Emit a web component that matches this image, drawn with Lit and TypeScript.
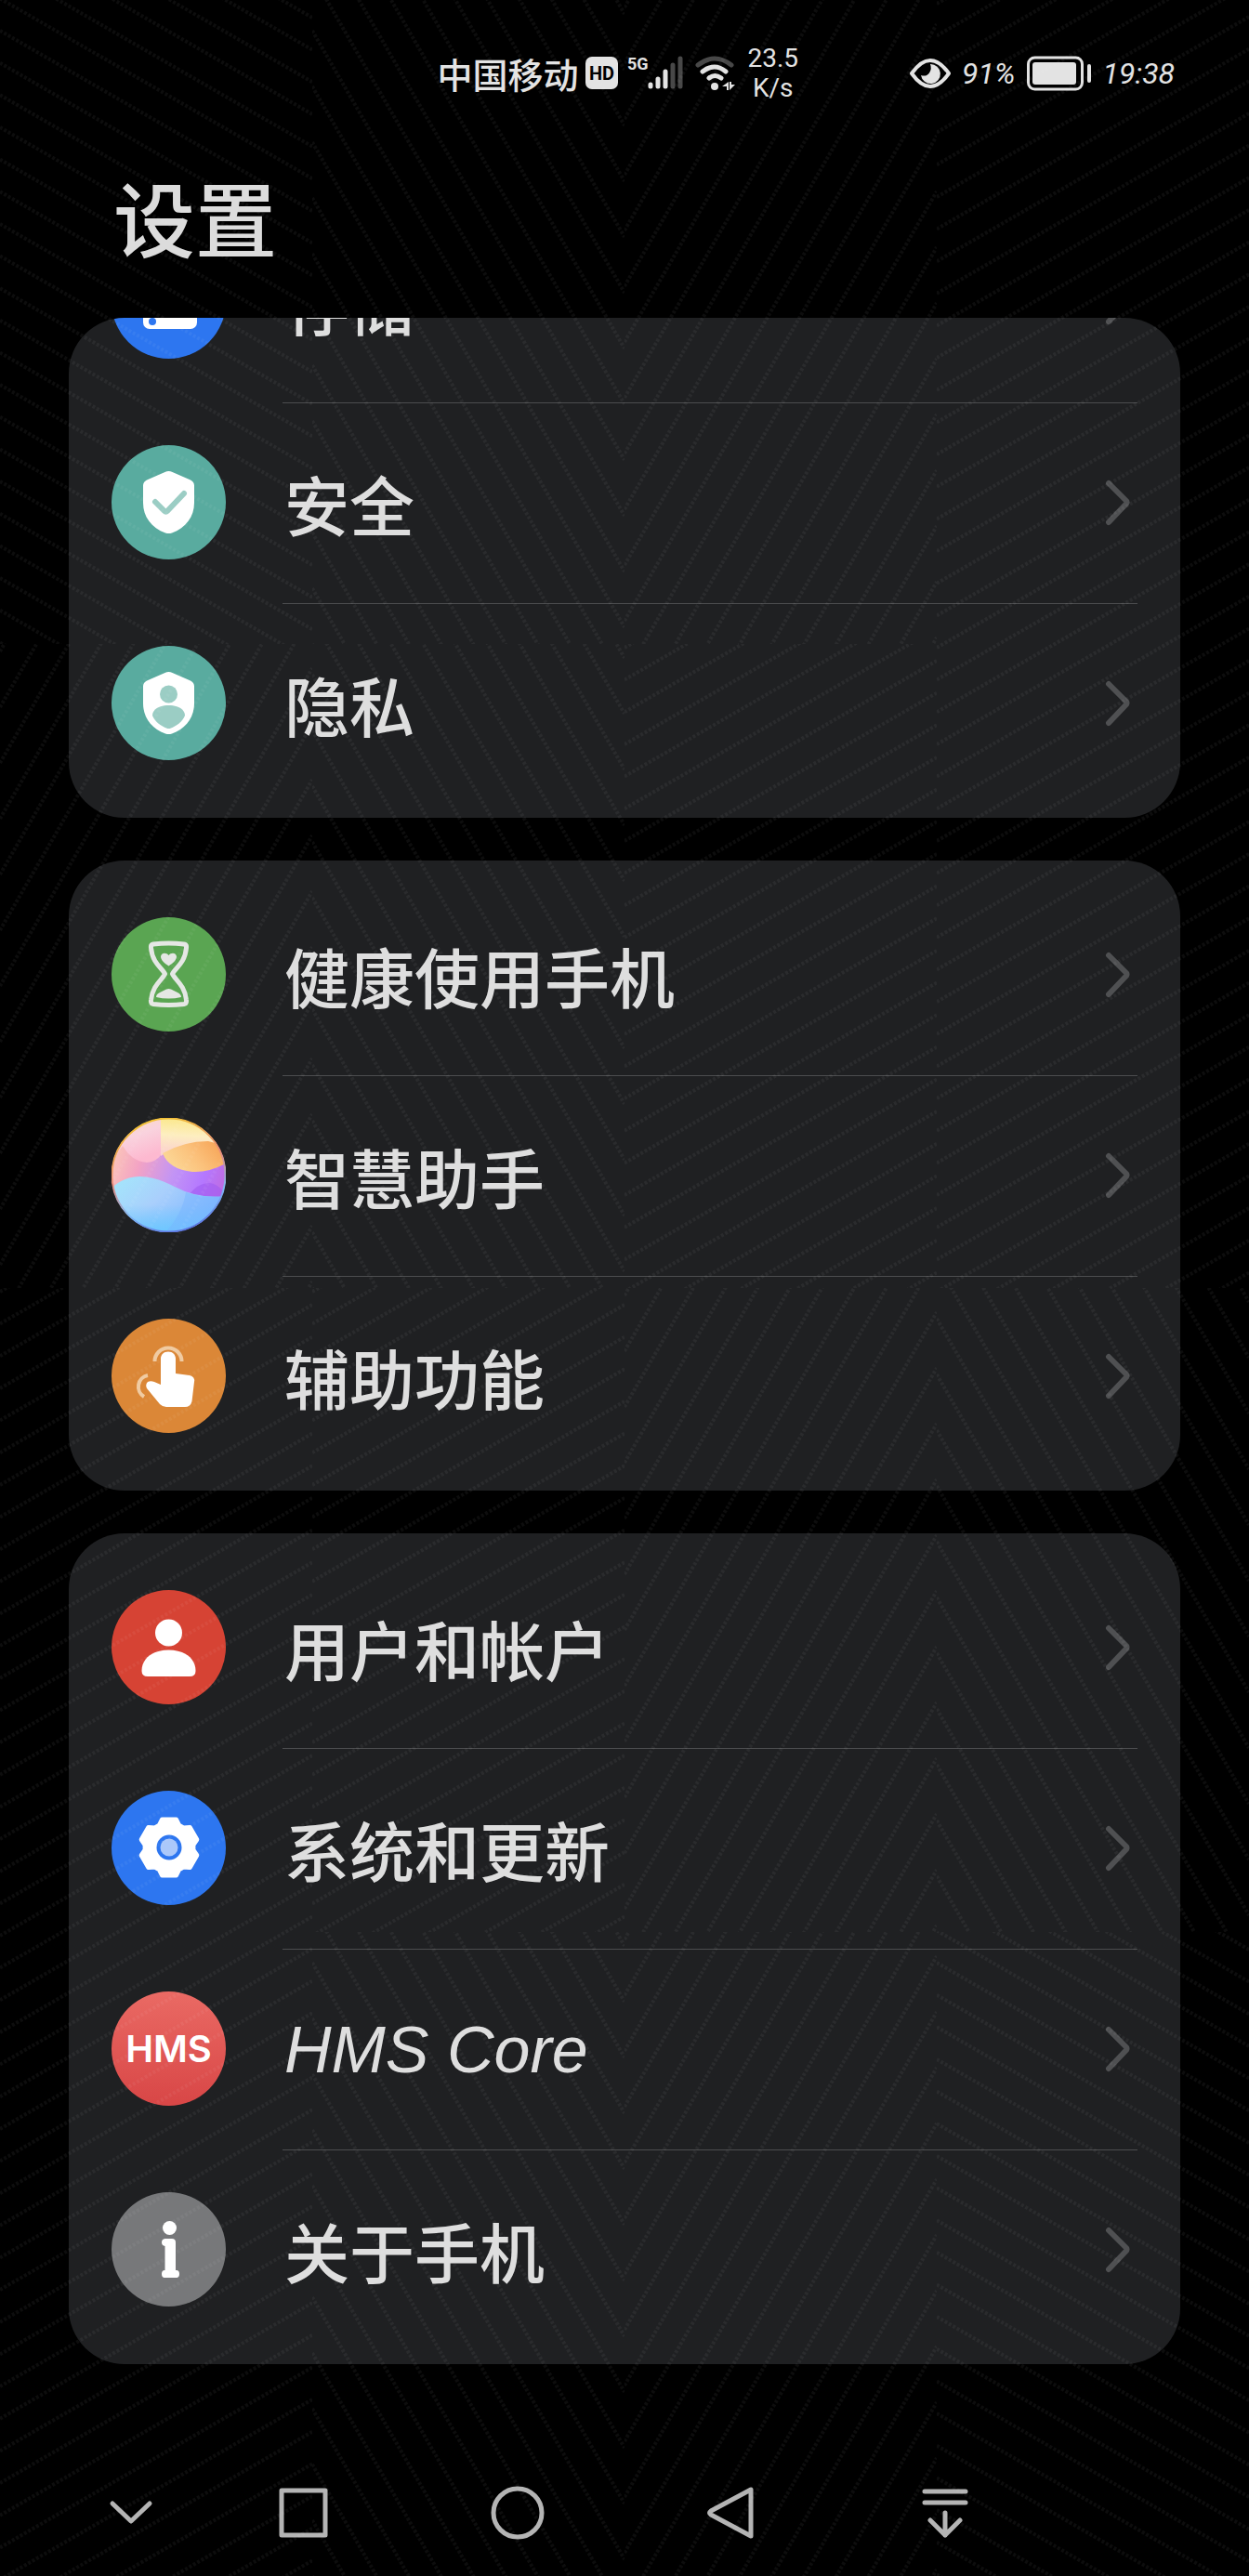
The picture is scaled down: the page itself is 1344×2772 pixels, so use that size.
import { LitElement, html, svg, css } from "lit";
import { customElement, property } from "lit/decorators.js";

type IconName =
  | "storage" | "shield" | "privacy" | "hourglass" | "assistant"
  | "touch" | "user" | "gear" | "hms" | "info";

interface Entry {
  icon: IconName;
  label: string;
}

const GROUPS: Entry[][] = [
  [
    { icon: "storage", label: "存储" },
    { icon: "shield", label: "安全" },
    { icon: "privacy", label: "隐私" },
  ],
  [
    { icon: "hourglass", label: "健康使用手机" },
    { icon: "assistant", label: "智慧助手" },
    { icon: "touch", label: "辅助功能" },
  ],
  [
    { icon: "user", label: "用户和帐户" },
    { icon: "gear", label: "系统和更新" },
    { icon: "hms", label: "HMS Core" },
    { icon: "info", label: "关于手机" },
  ],
];

const SHIELD =
  "M61.5 28q2 0 4 1L85 37.500q4 2 4 6V62c0 15-9 27-24 32.500q-3.500 1-7 0C43 89 34 77 34 62V43.500q0-4 4-6L57.500 29q2-1 4-1z";

const gearPath = (): string => {
  const points: string[] = [];
  for (let k = 0; k < 6; k++) {
    const mid = -90 + k * 60;
    for (const [offset, radius] of [[-24, 26], [-14, 31], [14, 31], [24, 26]]) {
      const a = ((mid + offset) * Math.PI) / 180;
      points.push(`${(62 + radius * Math.cos(a)).toFixed(1)} ${(61 + radius * Math.sin(a)).toFixed(1)}`);
    }
  }
  return `M${points.join("L")}Z`;
};

const disc = (fill: string) => svg`<circle cx="61.5" cy="61.5" r="61.5" fill=${fill} />`;

const ICONS: Record<IconName, unknown> = {
  storage: svg`${disc("#2d76f0")}
    <rect x="34" y="32" width="58" height="27" rx="7" fill="#fff" />
    <rect x="34" y="64" width="58" height="27" rx="7" fill="#fff" />
    <circle cx="44" cy="83" r="4" fill="#2d76f0" />`,
  shield: svg`${disc("#59ab9f")}<path d=${SHIELD} fill="#fff" />
    <path d="M47 61L57 71Q58.500 72.500 60 71L78 52" fill="none" stroke="#9bcdc4" stroke-width="6" stroke-linecap="round" />`,
  privacy: svg`${disc("#59ab9f")}<path d=${SHIELD} fill="#fff" />
    <circle cx="61.5" cy="52" r="9.500" fill="#9bcdc4" />
    <path d="M61.500 64C71 64 79 68 79 75C76 82 70 86 64 88.500Q61.500 89.500 59 88.500C53 86 47 82 44 75C44 68 52 64 61.500 64z" fill="#9bcdc4" />`,
  hourglass: svg`${disc("#5aa552")}
    <path d="M45 29Q61.500 27 78 29Q81 29.500 80.500 33C79 50 68 55 65.500 61C68 67 79 73 80.500 89Q81 93 78 93.500Q61.500 95.500 45 93.500Q42 93 42.500 89C44 73 55 67 57.500 61C55 55 44 50 42.500 33Q42 29.500 45 29z" fill="none" stroke="#e5e7e4" stroke-width="5" stroke-linejoin="round" />
    <path d="M61.500 52.500C57 49.500 53 46 53 42.500C53 38 59 37.500 61.500 41C64 37.500 70 38 70 42.500C70 46 66 49.500 61.500 52.500z" fill="#e5e7e4" />
    <path d="M48 86Q48 83 52 81L59 77.500Q61.500 76.500 64 77.500L71 81Q75 83 75 86Q61.500 89 48 86z" fill="#e5e7e4" />`,
  assistant: svg`
    <defs>
      <clipPath id="ball"><circle cx="61.5" cy="61.5" r="61.5" /></clipPath>
      <linearGradient id="mid" x1="0" y1="0.300" x2="1" y2="0.600">
        <stop offset="0" stop-color="#fbc8b8" /><stop offset="0.250" stop-color="#f3a3c4" />
        <stop offset="0.550" stop-color="#c294f5" /><stop offset="0.800" stop-color="#b478ff" /><stop offset="1" stop-color="#c06be0" />
      </linearGradient>
      <linearGradient id="rose" x1="0" y1="0" x2="0.400" y2="1">
        <stop offset="0" stop-color="#fddcb8" /><stop offset="0.500" stop-color="#f9d3de" /><stop offset="1" stop-color="#fdb9d0" />
      </linearGradient>
      <linearGradient id="sun" x1="0.300" y1="0" x2="0.200" y2="1">
        <stop offset="0" stop-color="#fbe88a" /><stop offset="0.450" stop-color="#fdeec0" /><stop offset="1" stop-color="#fbcdd0" />
      </linearGradient>
      <linearGradient id="amber" x1="0" y1="0.600" x2="1" y2="0.200">
        <stop offset="0" stop-color="#fcd998" /><stop offset="0.500" stop-color="#fbc07a" /><stop offset="1" stop-color="#f6a254" />
      </linearGradient>
      <linearGradient id="sea" x1="0" y1="0.200" x2="1" y2="0.700">
        <stop offset="0" stop-color="#a4e4fb" /><stop offset="0.400" stop-color="#a9cffc" /><stop offset="1" stop-color="#74b2ff" />
      </linearGradient>
      <linearGradient id="azure" x1="0" y1="0" x2="0" y2="1">
        <stop offset="0.500" stop-color="#6cc8ff" stop-opacity="0" /><stop offset="1" stop-color="#6cc8ff" />
      </linearGradient>
      <linearGradient id="rim" x1="0.300" y1="0" x2="0.600" y2="1">
        <stop offset="0" stop-color="#f2c52e" /><stop offset="0.450" stop-color="#e88a78" />
        <stop offset="0.750" stop-color="#7fb8f5" /><stop offset="1" stop-color="#5c74e0" />
      </linearGradient>
    </defs>
    <g clip-path="url(#ball)">
      <rect width="123" height="123" fill="url(#mid)" />
      <path d="M0 0H53V40Q48 47 38 48C26 47 18 40 12 30L0 46z" fill="url(#rose)" />
      <path d="M53 0H123V32Q86 20 56 39L53 41z" fill="url(#sun)" />
      <path d="M55 38Q78 25 104 25L123 30V49Q104 59 87 58C70 56 60 50 55 38z" fill="url(#amber)" />
      <path d="M82 84Q96 66 110 71Q118 74 123 84V90H90z" fill="#a05cf0" opacity="0.600" />
      <path d="M0 75Q14 63 30 63C44 63 56 68 68 74Q92 87 123 84V123H0z" fill="url(#sea)" />
      <path d="M0 75Q14 63 30 63C44 63 56 68 68 74Q92 87 123 84V123H0z" fill="url(#azure)" />
      <path d="M58 123Q76 104 80 80Q100 87 123 84V123z" fill="#78b4ff" opacity="0.450" />
    </g>
    <circle cx="61.5" cy="61.5" r="61" fill="none" stroke="url(#rim)" stroke-width="2" />`,
  touch: svg`${disc("#db8737")}
    <path d="M61 35.500C66 35.500 69 39 69 43V59L84 61Q90 62.500 89 68L86.500 89Q85 95 79 95H59Q55 95 52 92L38 75Q36 71 39 68Q42 66.500 46 68L53 71V43C53 39 56 35.500 61 35.500z" fill="#fff" />
    <path d="M46.500 46A14.500 14.500 0 1 1 75.500 46M39 61A12.500 12.500 0 0 0 35 84" fill="none" stroke="#f0cba2" stroke-width="4" />`,
  user: svg`${disc("#d64334")}
    <circle cx="61.5" cy="46" r="14.500" fill="#fff" />
    <path d="M61.500 64.500C78 64.500 90.500 73 90.500 87Q90.500 93 84 93H39Q32.500 93 32.500 87C32.500 73 45 64.500 61.500 64.500z" fill="#fff" />`,
  gear: svg`${disc("#2d76f0")}
    <path d=${gearPath()} fill="#fff" stroke="#fff" stroke-width="5" stroke-linejoin="round" />
    <circle cx="62" cy="61" r="13.500" fill="#2d76f0" /><circle cx="62" cy="61" r="9.500" fill="#abc8fa" />`,
  hms: svg`
    <defs><linearGradient id="hms" x1="0" y1="0" x2="0" y2="1">
      <stop offset="0" stop-color="#ea6a64" /><stop offset="1" stop-color="#d84646" />
    </linearGradient></defs>
    ${disc("url(#hms)")}
    <text class="hms" x="61.5" y="76" text-anchor="middle">HMS</text>`,
  info: svg`${disc("#77787a")}
    <circle cx="62.5" cy="38.5" r="7.500" fill="#fff" />
    <path d="M57.500 50H65Q69 50 69 54V84H70.500Q73 84.500 73 88T70.500 92H56.500Q54 91.500 54 88T56.500 84H57.500V58Q54 57.500 54 54T57.500 50z" fill="#fff" />`,
};

@customElement("settings-row")
export class SettingsRow extends LitElement {
  @property() icon: IconName = "info";
  @property() label = "";
  @property({ type: Boolean }) divided = false;

  static styles = css`
    :host {
      display: block;
    }
    .row {
      display: flex;
      height: 216px;
      padding: 0 46px;
      color: #dedede;
      text-decoration: none;
    }
    .icon {
      flex: none;
      align-self: center;
      width: 123px;
      height: 123px;
      margin: 0 61px 3px 0;
    }
    .hms {
      fill: #fff;
      font: 600 40px Inter, sans-serif;
    }
    .body {
      flex: 1;
      display: flex;
      align-items: center;
      justify-content: space-between;
      padding: 0 8px 0 2px;
      border-bottom: 1px solid transparent;
    }
    .divided {
      border-bottom-color: #4c4d4f;
    }
    .label {
      font: 500 70px/80px "Noto Sans CJK SC", sans-serif;
    }
    .latin {
      font: italic 70px/80px "Liberation Sans", sans-serif;
    }
    .chevron {
      width: 28px;
      height: 52px;
      margin-bottom: 1px;
      fill: none;
      stroke: #4f5052;
      stroke-width: 6;
      stroke-linecap: round;
      stroke-linejoin: round;
    }
  `;

  render() {
    const latin = /^[\x20-\x7e]+$/.test(this.label);
    return html`
      <a class="row" href="#">
        <svg class="icon" viewBox="0 0 123 123" aria-hidden="true">${ICONS[this.icon]}</svg>
        <span class="body ${this.divided ? "divided" : ""}">
          <span class="${latin ? "latin" : "label"}">${this.label}</span>
          <svg class="chevron" viewBox="0 0 28 52" aria-hidden="true"><path d="M5 5L24 24Q25 25.500 24 27L5 47" /></svg>
        </span>
      </a>
    `;
  }
}

@customElement("status-bar")
export class StatusBar extends LitElement {
  static styles = css`
    :host {
      display: block;
    }
    .bar {
      display: flex;
      align-items: center;
      justify-content: space-between;
      height: 158px;
      padding: 0 80px 0 35%;
      color: #e3e3e3;
    }
    .group {
      display: flex;
      align-items: center;
      gap: 12px;
    }
    .carrier {
      display: flex;
      align-items: center;
      gap: 8px;
      font: 500 38px/44px "Noto Sans CJK SC", sans-serif;
    }
    .speed {
      font: 28px/32px Roboto, sans-serif;
      text-align: center;
    }
    .figure {
      font: italic 32px/40px Roboto, sans-serif;
    }
    .badge {
      font: 700 20px Roboto, sans-serif;
      fill: #000;
    }
    .signal {
      overflow: visible;
    }
    .tech {
      font: 700 18px Roboto, sans-serif;
      fill: #e3e3e3;
    }
  `;

  render() {
    return html`
      <div class="bar">
        <div class="group">
          <span class="carrier">中国移动
            <svg width="36" height="36" viewBox="0 0 36 36">
              <rect width="35" height="35" rx="7" fill="#e3e3e3" />
              <text class="badge" x="17.5" y="25" text-anchor="middle">HD</text>
            </svg>
          </span>
          <svg class="signal" width="58" height="38" viewBox="0 0 58 38">
            <text class="tech" x="-3" y="15">5G</text>
            <g stroke-width="5" stroke-linecap="round" stroke="#e3e3e3">
              <path d="M22 31V33M30 25V33M38 17V33" />
              <path d="M46 10V33M54 3V33" stroke="#484848" />
            </g>
          </svg>
          <svg width="44" height="38" viewBox="0 0 44 38">
            <g fill="none" stroke-linecap="round" stroke-width="5" stroke="#e3e3e3">
              <path d="M3 10Q21 -4 39 10" stroke="#484848" />
              <path d="M8 17Q21 7 33 17M15 24Q21 19 28 24" />
            </g>
            <circle cx="21" cy="33" r="4" fill="#e3e3e3" />
            <path d="M29 33L36 28V37H34V33zM37 28V37L43 31H39V28z" fill="#e3e3e3" />
          </svg>
          <span class="speed">23.5<br />K/s</span>
        </div>
        <div class="group">
          <svg width="44" height="34" viewBox="0 0 44 34">
            <path d="M2 17Q12 3 22 3T42 17Q32 31 22 31T2 17z" fill="none" stroke="#e3e3e3" stroke-width="4" stroke-linejoin="round" />
            <path d="M22 7A10.500 10.500 0 1 1 12 19Q18 21 21 16.500T22 7z" fill="#e3e3e3" />
          </svg>
          <span class="figure">91%</span>
          <svg width="70" height="38" viewBox="0 0 70 38">
            <rect x="1.5" y="2" width="58" height="34" rx="7" fill="none" stroke="#e3e3e3" stroke-width="3" />
            <rect x="6" y="7" width="47" height="24" rx="3" fill="#e3e3e3" />
            <rect x="65" y="9" width="4" height="20" rx="2" fill="#e3e3e3" />
          </svg>
          <span class="figure">19:38</span>
        </div>
      </div>
    `;
  }
}

@customElement("nav-bar")
export class NavBar extends LitElement {
  static styles = css`
    :host {
      display: block;
    }
    .bar {
      display: grid;
      grid-template-columns: 70fr 142fr repeat(4, 230fr) 212fr;
      height: 136px;
    }
    .key {
      display: grid;
      place-items: center;
      padding: 0;
      border: 0;
      background: none;
    }
    .first {
      grid-column-start: 2;
    }
    .glyph {
      width: 60px;
      height: 60px;
      fill: none;
      stroke: #b4b4b4;
      stroke-width: 5;
      stroke-linecap: round;
      stroke-linejoin: round;
    }
  `;

  render() {
    const keys = [
      { name: "隐藏导航键", path: "M10 20L30 39L50 20" },
      { name: "多任务", path: "M6 6H53V54H6z" },
      { name: "主屏幕", path: "M30 4A26 26 0 0 1 30 56A26 26 0 0 1 30 4z" },
      { name: "返回", path: "M51 5V55L8 32Q5 30 8 28z" },
      { name: "通知面板", path: "M8 7H52M8 19H52M30 30V54M14 38L30 54L46 38" },
    ];
    return html`
      <nav class="bar">
        ${keys.map(
          (key, i) => html`
            <button class="key ${i === 0 ? "first" : ""}" aria-label=${key.name}>
              <svg class="glyph" viewBox="0 0 60 60"><path d=${key.path} /></svg>
            </button>
          `,
        )}
      </nav>
    `;
  }
}

type Hatch = "fall" | "plunge" | "climb" | "rise";

/* Slope, vertical pitch and first intercept of each family of dotted lines. */
const HATCHES: Record<Hatch, { slope: number; pitch: number; start: number }> = {
  fall: { slope: 0.577, pitch: 34.65, start: 33 },
  plunge: { slope: 1.732, pitch: 60, start: 33 },
  climb: { slope: -1.732, pitch: 60, start: 8 },
  rise: { slope: -0.577, pitch: 34.65, start: 4 },
};

const TILES: Hatch[] = [
  "fall", "plunge", "climb", "rise",
  "climb", "plunge", "rise", "rise",
  "rise", "rise", "climb", "plunge",
  "rise", "plunge", "climb", "fall",
];

@customElement("hatch-overlay")
export class HatchOverlay extends LitElement {
  static styles = css`
    :host {
      display: block;
    }
    .tiles {
      display: grid;
      grid-template: repeat(4, 1fr) / repeat(4, 1fr);
      height: 100%;
    }
    .tile {
      width: 100%;
      height: 100%;
      min-height: 0;
      overflow: hidden;
      fill: none;
      stroke: #fff;
      stroke-opacity: 0.05;
      stroke-width: 4;
      stroke-dasharray: 3 2;
    }
  `;

  private lines(kind: Hatch): string {
    const { slope, pitch, start } = HATCHES[kind];
    const drop = slope * 336;
    let d = "";
    for (let k = -12; k < 32; k++) {
      const y = start + k * pitch;
      if (Math.max(y, y + drop) < 0 || Math.min(y, y + drop) > 693) continue;
      d += `M0 ${y.toFixed(1)}L336 ${(y + drop).toFixed(1)}`;
    }
    return d;
  }

  render() {
    return html`
      <div class="tiles" aria-hidden="true">
        ${TILES.map(
          (kind) => html`
            <svg class="tile" viewBox="0 0 336 693" preserveAspectRatio="xMidYMid slice">
              <path d=${this.lines(kind)} />
            </svg>
          `,
        )}
      </div>
    `;
  }
}

@customElement("app-root")
export class AppRoot extends LitElement {
  static styles = css`
    :host {
      display: block;
      background: #000;
    }
    .screen {
      position: relative;
      display: flex;
      flex-direction: column;
      min-height: 100vh;
    }
    .title {
      margin: 0;
      padding: 24px 122px 60px;
      color: #dcdcdc;
      font: 500 88px/100px "Noto Sans CJK SC", sans-serif;
    }
    .list {
      display: flex;
      flex-direction: column;
      gap: 46px;
      padding: 0 74px;
    }
    .card {
      padding: 16px 0 14px;
      border-radius: 60px;
      background: #1f2022;
      overflow: hidden;
    }
    .scrolled {
      padding-top: 0;
    }
    .scrolled > :first-child {
      margin-top: -124px;
    }
    .nav {
      margin-top: auto;
    }
    .overlay {
      position: absolute;
      inset: 0;
      pointer-events: none;
    }
  `;

  render() {
    return html`
      <div class="screen">
        <status-bar></status-bar>
        <h1 class="title">设置</h1>
        <main class="list">
          ${GROUPS.map(
            (group, g) => html`
              <section class="card ${g === 0 ? "scrolled" : ""}">
                ${group.map(
                  (entry, i) => html`
                    <settings-row
                      .icon=${entry.icon}
                      .label=${entry.label}
                      .divided=${i < group.length - 1}
                    ></settings-row>
                  `,
                )}
              </section>
            `,
          )}
        </main>
        <nav-bar class="nav"></nav-bar>
        <hatch-overlay class="overlay"></hatch-overlay>
      </div>
    `;
  }
}
